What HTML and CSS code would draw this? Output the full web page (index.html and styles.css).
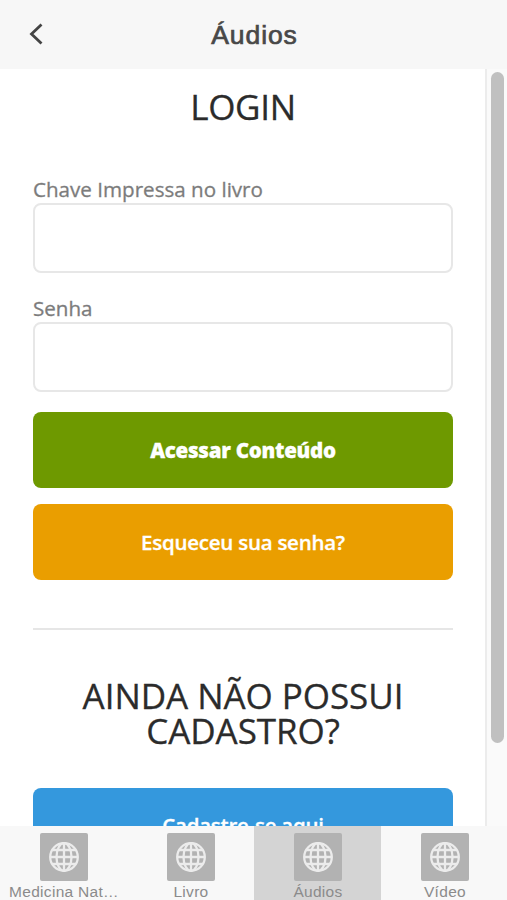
FILE: index.html
```html
<!DOCTYPE html>
<html lang="pt-BR">
<head>
<meta charset="utf-8">
<title>Áudios</title>
<link rel="stylesheet" href="styles.css">
</head>
<body>
<svg class="defs" width="0" height="0" aria-hidden="true">
  <symbol id="globe" viewBox="0 0 32 32">
    <circle cx="16" cy="16" r="13.8"/>
    <ellipse cx="16" cy="16" rx="7.5" ry="13.8"/>
    <path d="M16 2V30M2 16H30M4.5 9H27.5M4.5 23H27.5"/>
  </symbol>
</svg>
<div class="app">
  <header class="header">
    <svg class="back" viewBox="0 0 14 22"><path d="M12.5 1.5L2.5 11L12.5 20.5"/></svg>
    <h1 class="title">Áudios</h1>
  </header>
  <div class="content">
    <main class="page">
      <h2 class="heading">LOGIN</h2>
      <form class="form">
        <label class="label" for="chave">Chave Impressa no livro</label>
        <input class="input" id="chave" type="text">
        <label class="label" for="senha">Senha</label>
        <input class="input" id="senha" type="password">
        <button class="button green" type="button"><span>Acessar Conteúdo</span></button>
        <button class="button orange" type="button"><span>Esqueceu sua senha?</span></button>
      </form>
      <hr class="rule">
      <h2 class="heading wide">AINDA NÃO POSSUI CADASTRO?</h2>
      <button class="button blue" type="button"><span>Cadastre-se aqui</span></button>
    </main>
    <div class="track"><div class="thumb"></div></div>
  </div>
  <nav class="tabs">
    <a class="tab"><span class="tile"><svg class="globe"><use href="#globe"/></svg></span><span class="name">Medicina Nat…</span></a>
    <a class="tab"><span class="tile"><svg class="globe"><use href="#globe"/></svg></span><span class="name">Livro</span></a>
    <a class="tab active"><span class="tile"><svg class="globe"><use href="#globe"/></svg></span><span class="name">Áudios</span></a>
    <a class="tab"><span class="tile"><svg class="globe"><use href="#globe"/></svg></span><span class="name">Vídeo</span></a>
  </nav>
</div>
</body>
</html>
```
FILE: styles.css
```css
* { box-sizing: border-box; }
body { margin: 0; background: #fff; font-family: "Open Sans", sans-serif; }
.defs { display: none; }
.app { display: flex; flex-direction: column; height: 900px; overflow: hidden; }
.header { display: grid; grid-template-columns: 60px 1fr 60px; align-items: center; flex: none; height: 69px; background: #f7f7f7; }
.back { width: 14px; height: 22px; margin: -2px 0 0 29px; fill: none; stroke: #444; stroke-width: 2.8; }
.title { margin: 0 0 0 2px; color: #484848; font: 26.5px/36px "Liberation Sans", sans-serif; -webkit-text-stroke: 0.7px #484848; letter-spacing: 0.9px; text-align: center; }
.content { display: flex; flex: none; height: 757px; overflow: hidden; }
.page { flex: 1; padding: 20px 32px 0 33px; height: 900px; }
.heading { margin: 0; color: #2b2b2b; font-size: 35px; font-weight: 400; line-height: 35px; letter-spacing: -0.3px; text-align: center; -webkit-text-stroke: 0.3px #2b2b2b; }
.wide { letter-spacing: -0.05px; }
.form { display: flex; flex-direction: column; padding-top: 51px; }
.label { height: 28px; color: #7c7c7c; font-size: 20.6px; line-height: 28px; -webkit-text-stroke: 0.3px #7c7c7c; }
.input { width: 100%; height: 70px; margin: 0 0 21px; padding: 0 16px; border: 2px solid #e7e7e7; border-radius: 8px; background: #fff; font: inherit; }
.button { display: block; width: 100%; height: 76px; padding: 0; border: 0; border-radius: 8px; color: #fff; font: 600 20.5px/28px "Open Sans", sans-serif; letter-spacing: -0.25px; text-align: center; -webkit-text-stroke: 0.3px #fff; }
.green { margin-top: -1px; background: #6e9900; font-weight: 800; }
.orange { margin-top: 16px; background: #ea9e00; }
.blue { margin-top: 40px; padding-bottom: 2px; background: #3498dd; }
.rule { height: 2px; margin: 48px 0 48px; border: 0; background: #e6e6e6; }
.track { flex: none; width: 22px; padding: 3px 3px 0 4px; border-left: 2px solid #ececec; background: #fafafa; }
.thumb { width: 13px; height: 671px; border-radius: 7px; background: #c0c0c0; }
.tabs { display: grid; grid-template-columns: repeat(4, 127px); flex: none; height: 74px; background: #f8f8f8; }
.tab { display: flex; flex-direction: column; align-items: center; padding: 7px 0 0 1px; color: #8b8b8b; }
.active { background: #d4d4d4; }
.tile { display: grid; place-items: center; width: 48px; height: 48px; border-radius: 2px; background: #b2b2b2; }
.globe { width: 32px; height: 32px; fill: none; stroke: #ececec; stroke-width: 2.3; }
.name { margin-top: 1px; font: 15.5px/20px "Liberation Sans", sans-serif; letter-spacing: 0.3px; white-space: nowrap; }
```
